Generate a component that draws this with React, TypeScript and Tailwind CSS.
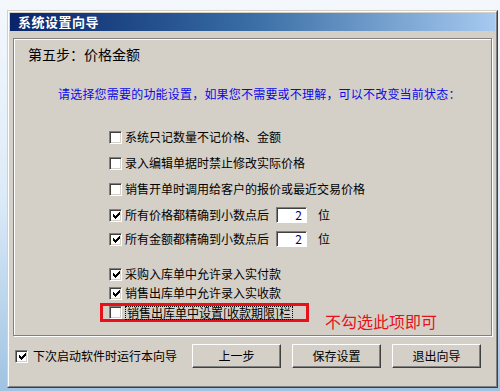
import React from "react";

const Check = ({ checked }: { checked?: boolean }) => {
  return (
    <span className="inline-flex h-[13px] w-[13px] shrink-0 items-center justify-center border-t border-l border-t-[#808080] border-l-[#808080] border-r border-b border-r-white border-b-white bg-white shadow-[inset_1px_1px_0_#404040,inset_-1px_-1px_0_#d4d0c8]">
      {checked && (
        <svg width="7" height="7" viewBox="0 0 7 7" className="ml-[1px] mt-[1px]" shapeRendering="crispEdges">
          <polygon points="0,2 2,4 7,-1 7,2 2,7 0,5" fill="#000" />
        </svg>
      )}
    </span>
  );
};

const Row = ({
  label,
  checked,
  className = "",
  children,
}: {
  label: string;
  checked?: boolean;
  className?: string;
  children?: React.ReactNode;
}) => {
  return (
    <div className={`flex h-[16px] items-center ${className}`}>
      <Check checked={checked} />
      <span className="ml-[3px] whitespace-nowrap">{label}</span>
      {children}
    </div>
  );
};

const Digits = () => {
  return (
    <>
      <span className="ml-[7px] flex h-[16px] w-[31px] items-center justify-end border-t border-l border-t-[#808080] border-l-[#808080] border-r border-b border-r-white border-b-white bg-white pr-[4px] text-[#000080] shadow-[inset_1px_1px_0_#404040]">
        2
      </span>
      <span className="ml-[11px]">位</span>
    </>
  );
};

const Button = ({ label }: { label: string }) => {
  return (
    <button className="flex h-[24px] w-[89px] items-center justify-center border-t border-l border-t-white border-l-white border-r border-b border-r-[#404040] border-b-[#404040] bg-[#d4d0c8] text-[12px] leading-none text-black shadow-[inset_-1px_-1px_0_#808080]">
      {label}
    </button>
  );
};

export default function App() {
  return (
    <main className="h-[391px] w-[500px] overflow-hidden bg-gradient-to-b from-[#f4f8fc] via-[#dcebf8] to-[#9fc3e2] pt-[10px] pl-[7px] font-['Noto_Sans_CJK_SC',sans-serif] text-[12px] leading-[16px] text-black">
      <div className="h-[378px] w-[491px] border-t border-l border-t-[#d4d0c8] border-l-[#d4d0c8] border-r border-b border-r-[#404040] border-b-[#404040] bg-[#d4d0c8]">
        <div className="h-full w-full border-t border-l border-t-white border-l-white border-r border-b border-r-[#808080] border-b-[#808080] p-[1px]">
          <div className="flex h-[18px] items-center bg-gradient-to-r from-[#0a246a] via-[#3a6ea5] to-[#a6caf0] pl-[8px] text-[13px] font-bold tracking-[0.5px] text-white">
            系统设置向导
          </div>

          <section className="ml-[3px] mt-[7px] h-[298px] w-[479px] border border-[#808080] shadow-[inset_1px_1px_0_#fff,1px_1px_0_#fff]">
            <h2 className="mt-[6px] ml-[14px] text-[14px] leading-[18px]">第五步：价格金额</h2>
            <p className="mt-[23px] ml-[44px] whitespace-nowrap tracking-[0.2px] text-[#0a0ae6]">
              请选择您需要的功能设置，如果您不需要或不理解，可以不改变当前状态：
            </p>

            <div className="flex flex-col pl-[95px]">
              <Row className="mt-[27px]" label="系统只记数量不记价格、金额" />
              <Row className="mt-[10px]" label="录入编辑单据时禁止修改实际价格" />
              <Row className="mt-[10px]" label="销售开单时调用给客户的报价或最近交易价格" />
              <Row className="mt-[10px]" checked label="所有价格都精确到小数点后">
                <Digits />
              </Row>
              <Row className="mt-[8px]" checked label="所有金额都精确到小数点后">
                <Digits />
              </Row>
              <Row className="mt-[19px]" checked label="采购入库单中允许录入实付款" />
              <Row className="mt-[3px]" checked label="销售出库单中允许录入实收款" />

              <div className="mt-[2px] -ml-[9px] flex items-start">
                <div className="flex h-[19px] w-[209px] items-center border-[3px] border-[#e8111a] pl-[6px]">
                  <Check />
                  <span className="ml-[3px] whitespace-nowrap border border-dotted border-black px-[1px] leading-[12px]">
                    销售出库单中设置[收款期限]栏
                  </span>
                </div>
                <span className="mt-[8px] ml-[16px] whitespace-nowrap text-[16px] leading-[20px] text-[#e8111a]">
                  不勾选此项即可
                </span>
              </div>
            </div>
          </section>

          <div className="mt-[8px] flex h-[24px] items-center">
            <div className="ml-[5px] flex items-center">
              <Check checked />
              <span className="ml-[5px]">下次启动软件时运行本向导</span>
            </div>
            <div className="ml-[15px] flex gap-[11px]">
              <Button label="上一步" />
              <Button label="保存设置" />
              <Button label="退出向导" />
            </div>
          </div>
        </div>
      </div>
    </main>
  );
}
